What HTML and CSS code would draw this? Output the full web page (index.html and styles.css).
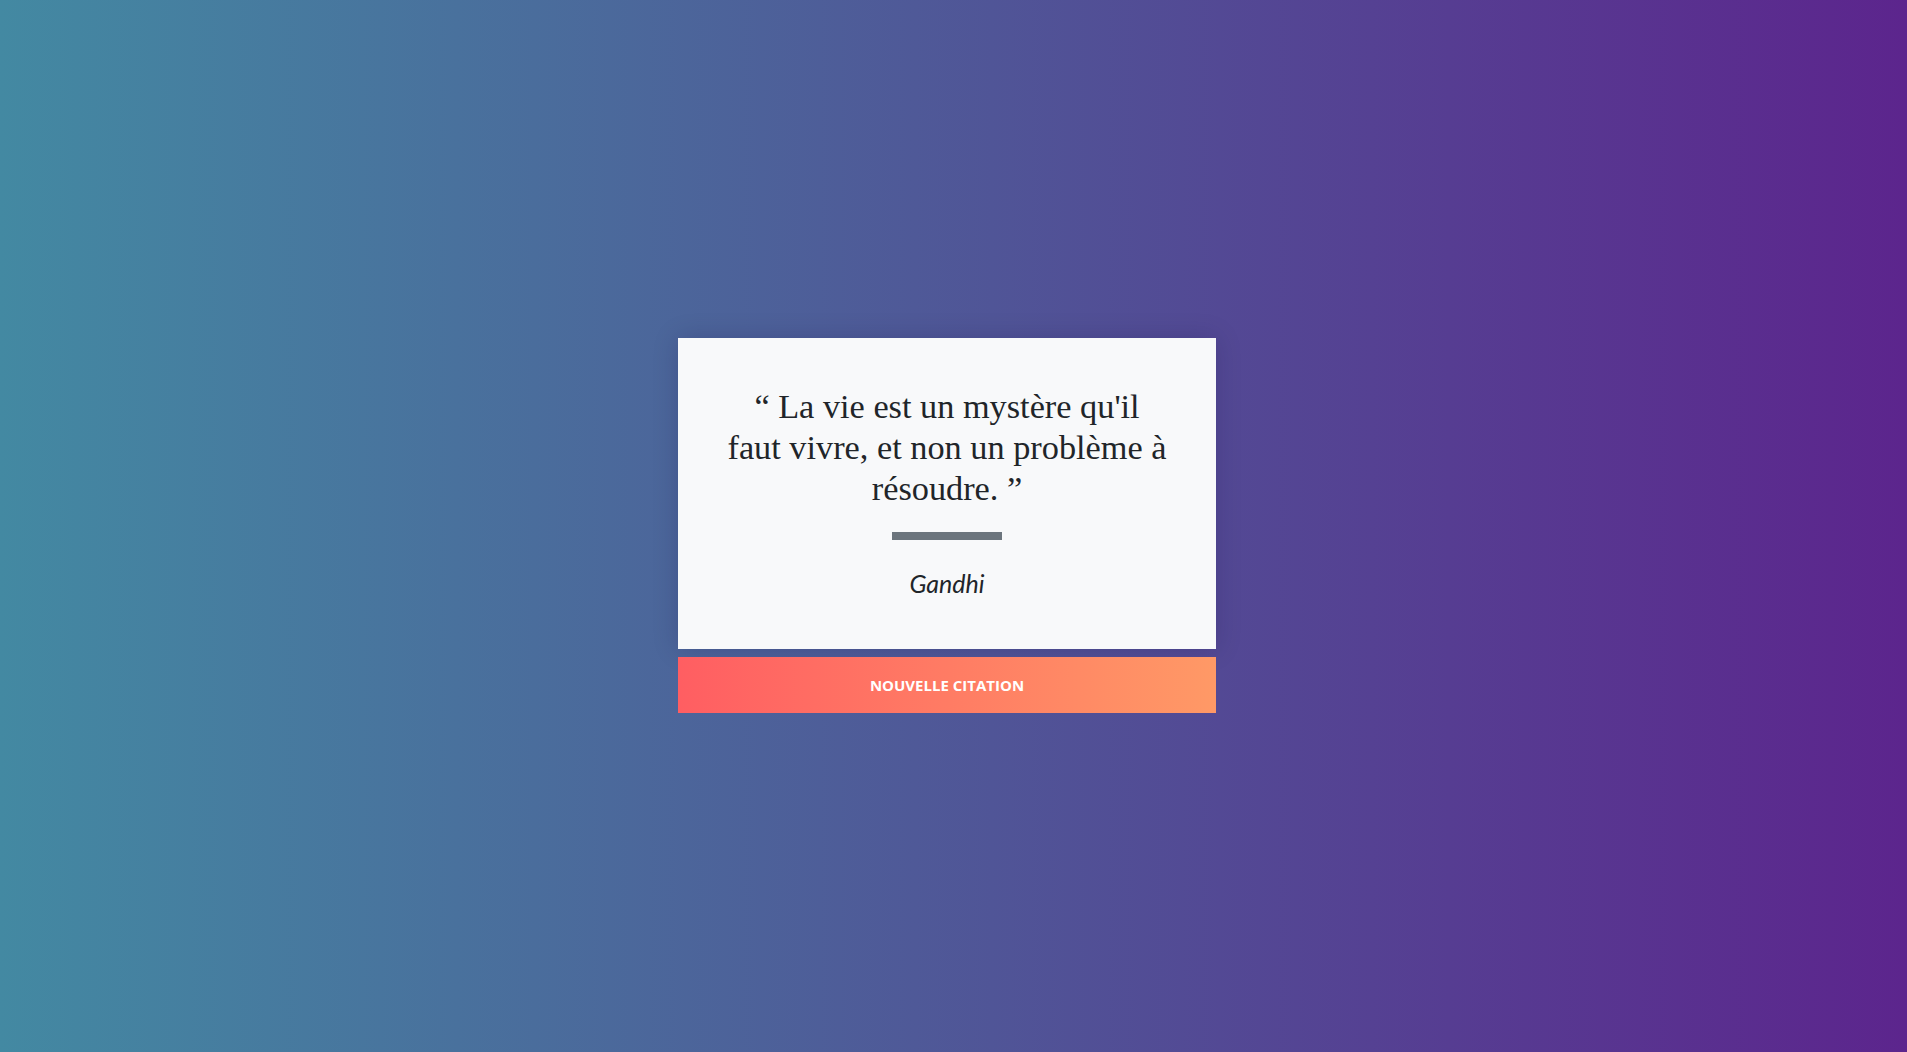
FILE: index.html
```html
<!DOCTYPE html>
<html lang="fr">
<head>
<meta charset="utf-8">
<title>Citation</title>
<link rel="stylesheet" href="styles.css">
</head>
<body>
<main class="stage">
  <section class="wrapper">
    <div class="card">
      <p class="quote">“ La vie est un mystère qu'il faut vivre, et non un problème à résoudre. ”</p>
      <div class="rule"></div>
      <p class="author">Gandhi</p>
    </div>
    <button class="next" type="button">Nouvelle citation</button>
  </section>
</main>
</body>
</html>
```

FILE: styles.css
```css
html, body {
  margin: 0;
  height: 100%;
}
body {
  background: linear-gradient(to right, #4389a2, #5c258d);
  font-family: "Liberation Serif", serif;
}
.stage {
  height: 100%;
  display: flex;
  align-items: center;
  justify-content: center;
  padding-right: 13px;
  padding-bottom: 1px;
  box-sizing: border-box;
}
.wrapper {
  width: 538px;
  display: flex;
  flex-direction: column;
  gap: 8px;
}
.card {
  background: #f8f9fa;
  height: 311px;
  box-sizing: border-box;
  padding: 48px 48px 0;
  display: flex;
  flex-direction: column;
  align-items: center;
  box-shadow: 0 0 24px rgba(20, 10, 60, 0.18);
}
.quote {
  margin: 0;
  font-family: "Liberation Serif", serif;
  font-size: 34.3px;
  line-height: 1.2;
  color: #212529;
  text-align: center;
}
.rule {
  width: 110px;
  height: 8px;
  background: #6c757d;
  margin-top: 23px;
}
.author {
  margin: 27px 0 0;
  font-family: Lato, "Open Sans", sans-serif;
  font-style: italic;
  font-size: 25px;
  line-height: 32px;
  color: #212529;
}
.next {
  height: 56px;
  border: 0;
  padding: 0;
  background: linear-gradient(to right, #ff5e62, #ff9966);
  color: #fff;
  font-family: "Open Sans", sans-serif;
  font-weight: 700;
  font-size: 15px;
  text-transform: uppercase;
  cursor: pointer;
}
```
